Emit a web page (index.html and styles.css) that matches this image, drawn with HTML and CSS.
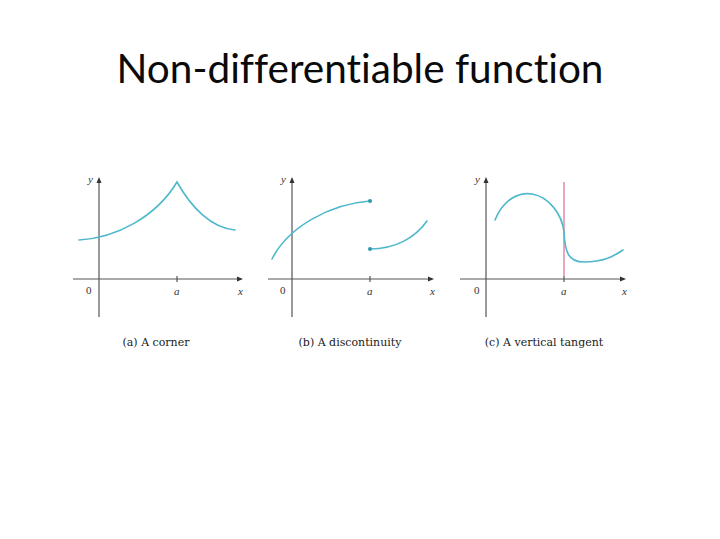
FILE: index.html
```html
<!DOCTYPE html>
<html>
<head>
<meta charset="utf-8">
<link rel="stylesheet" href="styles.css">
</head>
<body>
<div class="slide">
  <h1 class="title">Non-differentiable function</h1>
  <div class="figures">
    <figure class="fig">
      <svg class="graph" width="180" height="150" viewBox="0 0 180 150">
        <line class="axis" x1="33" y1="145" x2="33" y2="9"/>
        <polygon class="arrow" points="33,5 30.5,11 35.5,11"/>
        <line class="axis" x1="7" y1="107" x2="172" y2="107"/>
        <polygon class="arrow" points="177,107 171,104.5 171,109.5"/>
        <line class="axis" x1="111" y1="104" x2="111" y2="110"/>
        <text class="lbl" x="22" y="11">y</text>
        <text class="num" x="20" y="122">0</text>
        <text class="lbl" x="108" y="123">a</text>
        <text class="lbl" x="172" y="123">x</text>
        <path class="curve" d="M13,68 C50,66 90,45 111,10 C125,35 145,56 169,58"/>
      </svg>
      <figcaption class="cap">(a) A corner</figcaption>
    </figure>
    <figure class="fig">
      <svg class="graph" width="180" height="150" viewBox="0 0 180 150">
        <line class="axis" x1="32" y1="145" x2="32" y2="9"/>
        <polygon class="arrow" points="32,5 29.5,11 34.5,11"/>
        <line class="axis" x1="8" y1="107" x2="169" y2="107"/>
        <polygon class="arrow" points="174,107 168,104.5 168,109.5"/>
        <line class="axis" x1="110" y1="104" x2="110" y2="110"/>
        <text class="lbl" x="21" y="11">y</text>
        <text class="num" x="20" y="122">0</text>
        <text class="lbl" x="107" y="123">a</text>
        <text class="lbl" x="170" y="123">x</text>
        <path class="curve" d="M12,87 C28,55 70,32 110,29"/>
        <circle class="dot" cx="110" cy="29" r="2"/>
        <path class="curve" d="M110,77 C135,77 155,66 167,49"/>
        <circle class="dot" cx="110" cy="77" r="2"/>
      </svg>
      <figcaption class="cap">(b) A discontinuity</figcaption>
    </figure>
    <figure class="fig">
      <svg class="graph" width="180" height="150" viewBox="0 0 180 150">
        <line class="axis" x1="32" y1="145" x2="32" y2="9"/>
        <polygon class="arrow" points="32,5 29.5,11 34.5,11"/>
        <line class="axis" x1="6" y1="107" x2="167" y2="107"/>
        <polygon class="arrow" points="172,107 166,104.5 166,109.5"/>
        <line class="axis" x1="110" y1="104" x2="110" y2="110"/>
        <text class="lbl" x="21" y="11">y</text>
        <text class="num" x="20" y="122">0</text>
        <text class="lbl" x="107" y="123">a</text>
        <text class="lbl" x="168" y="123">x</text>
        <line class="tangent" x1="110" y1="10" x2="110" y2="104"/>
        <path class="curve" d="M41,48 C50,26 66,20 78,22 C95,25 108,42 110,60 C111,80 114,90 130,90 C150,90 160,84 169,78"/>
      </svg>
      <figcaption class="cap">(c) A vertical tangent</figcaption>
    </figure>
  </div>
</div>
</body>
</html>
```
FILE: styles.css
```css
html, body {
  margin: 0;
  padding: 0;
  background: #ffffff;
}
.slide {
  width: 720px;
  height: 539px;
  overflow: hidden;
}
.title {
  margin: 0;
  padding-top: 41px;
  text-align: center;
  font-family: "Lato", "Open Sans", sans-serif;
  font-weight: 400;
  font-size: 40.5px;
  line-height: 54px;
  color: #0a0a0a;
  font-variant-ligatures: none;
}
.figures {
  display: flex;
  gap: 14px;
  padding-left: 66px;
  margin-top: 77px;
}
.fig {
  margin: 0;
  width: 180px;
  display: flex;
  flex-direction: column;
  align-items: center;
}
.graph {
  display: block;
}
.axis {
  stroke: #555555;
  stroke-width: 1.2;
}
.arrow {
  fill: #333333;
}
.curve {
  fill: none;
  stroke: #4fb8cc;
  stroke-width: 1.6;
  stroke-linecap: round;
}
.dot {
  fill: #2f9aad;
}
.tangent {
  stroke: #d9608a;
  stroke-width: 1.1;
}
.lbl {
  font-family: "Liberation Serif", serif;
  font-style: italic;
  font-size: 11px;
  fill: #333333;
}
.num {
  font-family: "Liberation Serif", serif;
  font-size: 11px;
  fill: #333333;
}
.cap {
  margin-top: 14px;
  font-family: "DejaVu Serif", serif;
  font-size: 11px;
  color: #1a1a1a;
  white-space: nowrap;
}
```
